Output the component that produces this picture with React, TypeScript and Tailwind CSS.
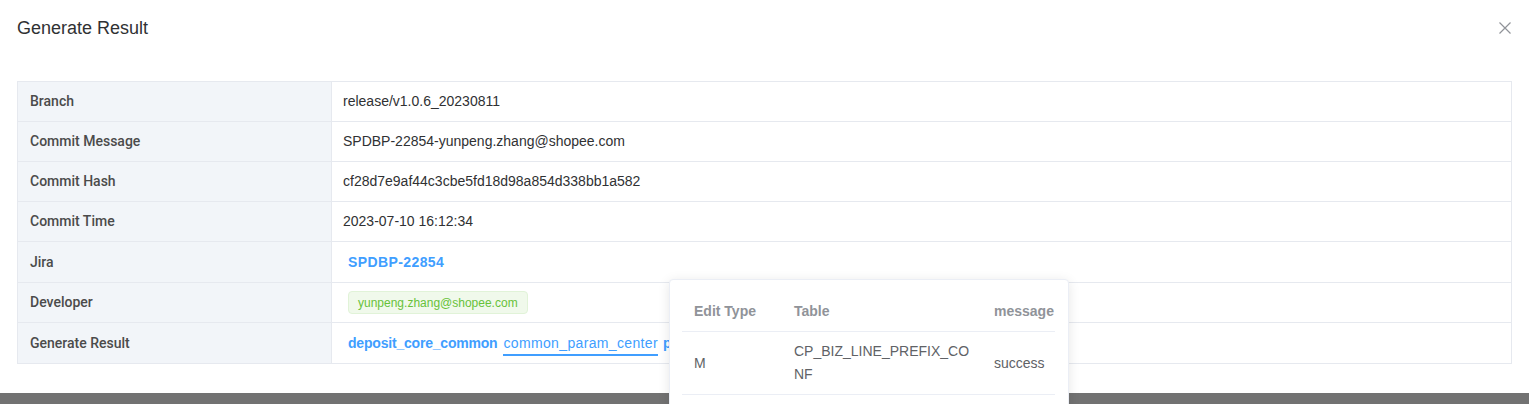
import React from "react";

const rows: { label: string; h: string; kind: string; value?: string }[] = [
  { label: "Branch", h: "h-[40px]", kind: "text", value: "release/v1.0.6_20230811" },
  { label: "Commit Message", h: "h-[40px]", kind: "text", value: "SPDBP-22854-yunpeng.zhang@shopee.com" },
  { label: "Commit Hash", h: "h-[40px]", kind: "text", value: "cf28d7e9af44c3cbe5fd18d98a854d338bb1a582" },
  { label: "Commit Time", h: "h-[40px]", kind: "text", value: "2023-07-10 16:12:34" },
  { label: "Jira", h: "h-[41px]", kind: "jira" },
  { label: "Developer", h: "h-[40px]", kind: "tag" },
  { label: "Generate Result", h: "h-[41px]", kind: "result" },
];

function Value({ kind, value }: { kind: string; value?: string }) {
  if (kind === "jira")
    return <span className="pl-[5px] font-bold tracking-[0.4px] text-[#409eff]">SPDBP-22854</span>;
  if (kind === "tag")
    return (
      <span className="ml-[5px] inline-flex h-[23px] items-center rounded-[4px] border border-[#e1f3d8] bg-[#f0f9eb] px-[9px] text-[12px] text-[#67c23a]">
        yunpeng.zhang@shopee.com
      </span>
    );
  if (kind === "result")
    return (
      <span className="flex items-center pl-[5px]">
        <span className="font-bold tracking-[-0.2px] text-[#409eff]">deposit_core_common</span>
        <span className="relative ml-[6px] tracking-[0.35px] text-[#409eff]">
          common_param_center
          <span className="absolute left-0 right-0 bottom-[-2px] h-[2px] bg-[#409eff]" />
        </span>
        <span className="ml-[5px] font-bold text-[#409eff]">pay_common</span>
      </span>
    );
  return <span className="text-[#303133]">{value}</span>;
}

export default function App() {
  return (
    <div className="relative h-[404px] w-[1529px] overflow-hidden bg-[#727272] font-['Liberation_Sans',Arial,sans-serif]">
      <div className="h-[393px] bg-white">
        <div className="flex items-start justify-between pl-[17px] pr-[17px] pt-[18px]">
          <span className="text-[18px] leading-[20px] text-[#303133]">Generate Result</span>
          <svg width="12" height="12" viewBox="0 0 12 12" className="mt-[4px] mr-[1px]">
            <path d="M0.5 0.5 L11.5 11.5 M11.5 0.5 L0.5 11.5" stroke="#909399" strokeWidth="1.2" />
          </svg>
        </div>
        <div className="mx-[17px] mt-[43px] border-l border-t border-r border-[#e6e9ef] text-[14px]">
          {rows.map((r) => (
            <div key={r.label} className={`flex border-b border-[#e6e9ef] ${r.h}`}>
              <div className="flex w-[314px] shrink-0 items-center border-r border-[#e6e9ef] bg-[#f2f5f9] pl-[12px] font-['Roboto',sans-serif] font-medium text-[#4b4b4b]">
                {r.label}
              </div>
              <div className="flex flex-1 items-center pl-[11px]">
                <Value kind={r.kind} value={r.value} />
              </div>
            </div>
          ))}
        </div>
      </div>

      <div className="absolute left-[669px] top-[279px] h-[140px] w-[400px] rounded-[4px] border border-[#ebeef5] bg-white p-[12px] shadow-[0_2px_12px_rgba(0,0,0,0.1)]">
        <div className="w-[373px] text-[14px] leading-[23px]">
          <div className="flex border-b border-[#ebeef5] py-[8px] font-bold text-[#909399]">
            <div className="w-[100px] px-[12px]">Edit Type</div>
            <div className="w-[200px] px-[12px]">Table</div>
            <div className="w-[73px] pl-[12px]">message</div>
          </div>
          <div className="flex items-center border-b border-[#ebeef5] py-[8px] text-[#606266]">
            <div className="w-[100px] px-[12px]">M</div>
            <div className="w-[200px] break-all px-[12px]">CP_BIZ_LINE_PREFIX_CONF</div>
            <div className="w-[73px] pl-[12px]">success</div>
          </div>
        </div>
      </div>
    </div>
  );
}
